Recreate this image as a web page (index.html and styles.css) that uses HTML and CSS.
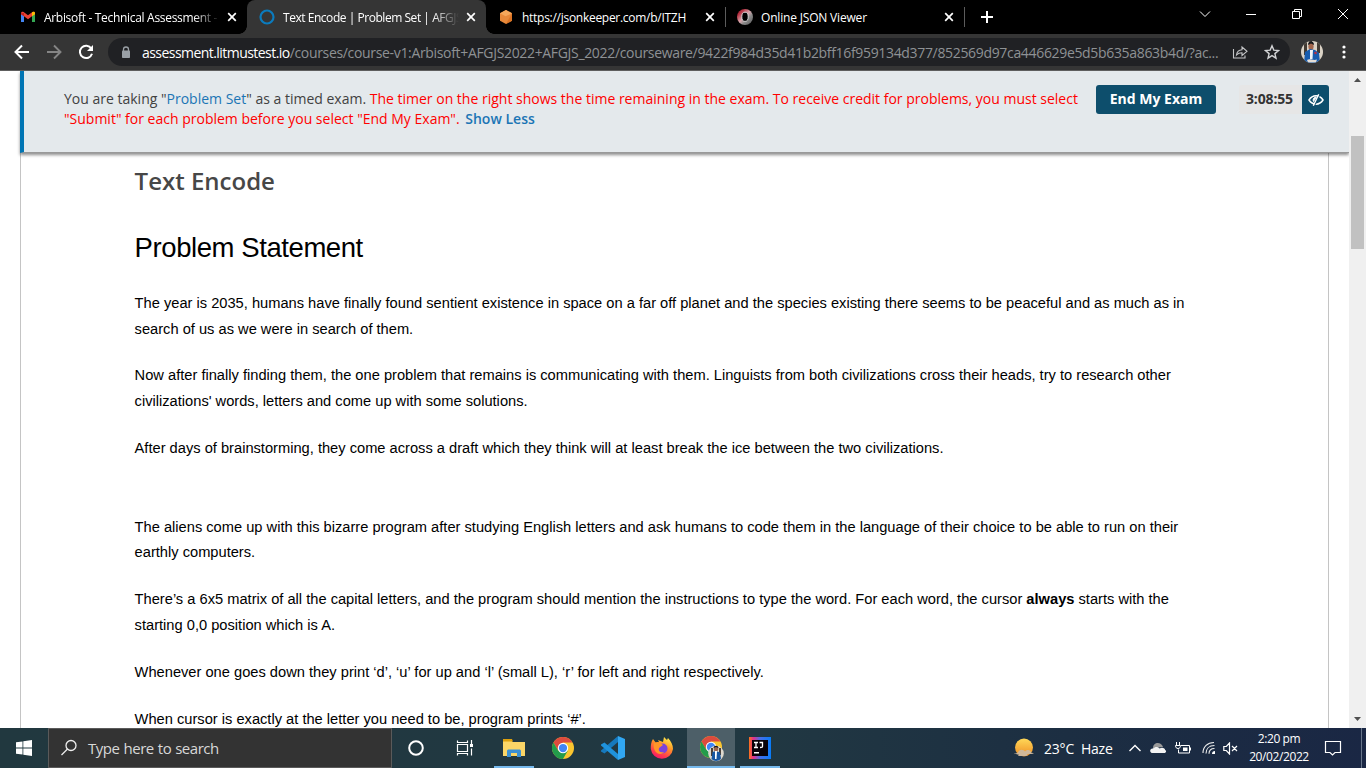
FILE: index.html
```html
<!DOCTYPE html>
<html lang="en">
<head>
<meta charset="utf-8">
<title>Text Encode | Problem Set</title>
<link rel="stylesheet" href="styles.css">
</head>
<body>
<div class="screen">
  <header class="tabstrip">
    <div class="tab">
      <svg class="favicon" viewBox="0 0 16 16"><path d="M1 13V4l3 2.2V13z" fill="#4285f4"/><path d="M12 13V6.2L15 4v9z" fill="#34a853"/><path d="M1 4.2C1 2.6 2.700 2.300 3.600 3L8 6.300 12.400 3C13.300 2.300 15 2.600 15 4.200V5L8 10.300 1 5z" fill="#ea4335"/><path d="M12 3.300C13.300 2.300 15 2.600 15 4.200V5.200L12 7.300z" fill="#fbbc04"/><path d="M1 4.200V5.200L4 7.300V4z" fill="#c5221f"/></svg>
      <span class="tab-title fade t1">Arbisoft - Technical Assessment -</span>
      <svg class="close" viewBox="0 0 10 10"><path d="M1.200 1.200l7.600 7.600M8.800 1.200L1.200 8.800"/></svg>
    </div>
    <div class="tab active">
      <svg class="favicon" viewBox="0 0 16 16"><circle cx="8" cy="8" r="6.500" fill="none" stroke="#0b7bbd" stroke-width="2.200"/></svg>
      <span class="tab-title fade t2">Text Encode | Problem Set | AFGJS</span>
      <svg class="close" viewBox="0 0 10 10"><path d="M1.200 1.200l7.600 7.600M8.800 1.200L1.200 8.800"/></svg>
    </div>
    <div class="tab">
      <svg class="favicon" viewBox="0 0 16 16"><path d="M8 1l6 3.300v7.400L8 15l-6-3.300V4.300z" fill="#e8893a"/><path d="M8 1l6 3.300-6.500 3L2 4.300z" fill="#f5a75b"/><path d="M14 4.300v7.400L8 15z" fill="#dc7424"/></svg>
      <span class="tab-title t3">https://jsonkeeper.com/b/ITZH</span>
      <svg class="close" viewBox="0 0 10 10"><path d="M1.200 1.200l7.600 7.600M8.800 1.200L1.200 8.800"/></svg>
    </div>
    <div class="tab ruled">
      <svg class="favicon" viewBox="0 0 16 16"><defs><linearGradient id="ring" x1="0" y1="0" x2="1" y2="1"><stop offset=".2" stop-color="#b52b3c"/><stop offset=".48" stop-color="#d8a7ad"/><stop offset=".65" stop-color="#8a8a8a"/><stop offset="1" stop-color="#555"/></linearGradient></defs><circle cx="8" cy="8" r="8" fill="url(#ring)"/><ellipse cx="8" cy="7.800" rx="3.200" ry="4.600" fill="#000" stroke="#ddd" stroke-width=".9"/></svg>
      <span class="tab-title t4">Online JSON Viewer</span>
      <svg class="close" viewBox="0 0 10 10"><path d="M1.200 1.200l7.600 7.600M8.800 1.200L1.200 8.800"/></svg>
    </div>
    <div class="newtab"><svg width="12" height="12" viewBox="0 0 12 12"><path d="M6 0v12M0 6h12" stroke="#fff" stroke-width="2"/></svg></div>
    <div class="winctl">
      <svg viewBox="0 0 12 12"><path d="M1 3.500l5 5 5-5"/></svg>
      <svg viewBox="0 0 12 12"><path d="M1 6.500h10"/></svg>
      <svg viewBox="0 0 12 12"><path d="M1.500 3.500h7v7h-7zM3.500 3.500v-2h7v7h-2"/></svg>
      <svg viewBox="0 0 12 12"><path d="M1 1l10 10M11 1L1 11"/></svg>
    </div>
  </header>

  <nav class="toolbar">
    <div class="navbtns">
      <svg width="16" height="16" viewBox="0 0 16 16"><path d="M15 8H2M8 1.500L1.500 8 8 14.500" stroke="#fff" stroke-width="2" fill="none"/></svg>
      <svg width="16" height="16" viewBox="0 0 16 16"><path d="M1 8h13M8 1.500L14.500 8 8 14.500" stroke="#858585" stroke-width="1.900" fill="none"/></svg>
      <svg width="16" height="16" viewBox="0 0 16 16"><path d="M13.300 4.500A6.200 6.200 0 1 0 14 9.800" stroke="#fff" stroke-width="2" fill="none"/><path d="M15 1v6H9z" fill="#fff"/></svg>
    </div>
    <div class="omnibox">
      <svg class="lock" width="10" height="13" viewBox="0 0 10 13"><path d="M2.500 5V3.500a2.500 2.500 0 0 1 5 0V5" fill="none" stroke="#9aa0a6" stroke-width="1.300"/><rect x="1" y="4.500" width="8" height="7.500" rx=".8" fill="#9aa0a6"/></svg>
      <span class="url"><b>assessment.litmustest.io</b><span class="path">/courses/course-v1:Arbisoft+AFGJS2022+AFGJS_2022/courseware/9422f984d35d41b2bff16f959134d377/852569d97ca446629e5d5b635a863b4d/?ac...</span></span>
      <svg class="share" width="16" height="16" viewBox="0 0 16 16"><path d="M1.500 5v9h11.500v-2.500M4.500 11C5 7.500 7 6 10 5.800V3l5 4.300-5 4.200V8.700C7.500 8.700 6 9.300 4.500 11z" fill="none" stroke="#c5c6c8" stroke-width="1.100"/></svg>
      <svg class="star" width="16" height="16" viewBox="0 0 16 16"><path d="M8 1.800l1.800 4.300 4.700.4-3.600 3.100 1.100 4.600L8 11.700l-4 2.500 1.100-4.600L1.500 6.500l4.700-.4z" fill="none" stroke="#d2d3d5" stroke-width="1.400"/></svg>
    </div>
    <svg class="avatar" width="22" height="22" viewBox="0 0 22 22"><defs><clipPath id="av"><circle cx="11" cy="11" r="11"/></clipPath></defs><g clip-path="url(#av)"><path d="M0 0h22v22H0z" fill="#dad2c5"/><path d="M3 0h3v14H3zM8 0h3v8H8zM16 0h3v12h-3z" fill="#423b34"/><ellipse cx="10" cy="5.500" rx="2.600" ry="3.500" fill="#a3664c"/><path d="M7 4c0-5 6-5 6 0L10 2.500z" fill="#17171a"/><path d="M3 22l1-11 5-3 5 1 4 3 1 10z" fill="#175cae"/><path d="M9 9l3 0-.5 9H9z" fill="#f1f4f7"/><circle cx="14.500" cy="12" r="1.300" fill="#b63045"/><path d="M6 19c3-2 6 1 10-.5l-1 3H7z" fill="#e5ded5"/></g></svg>
    <svg class="dots" width="4" height="14" viewBox="0 0 4 14" fill="#fff"><circle cx="2" cy="2" r="1.600"/><circle cx="2" cy="7" r="1.600"/><circle cx="2" cy="12" r="1.600"/></svg>
  </nav>

  <div class="viewport">
    <main class="page">
      <section class="exam-bar">
        <p class="exam-text"><span class="l1">You are taking "<a>Problem Set</a>" as a timed exam. <em>The timer on the right shows the time remaining in the exam. To receive credit for problems, you must select</em></span><br><span class="l2"><em>"Submit" for each problem before you select "End My Exam".</em> <a class="less">Show Less</a></span></p>
        <button class="end">End My Exam</button>
        <div class="timer"><span class="time">3:08:55</span><span class="eye"><svg width="16" height="12" viewBox="0 0 16 12" fill="none" stroke="#fff"><path d="M1 6C4.500 .3 11.500 .3 15 6 11.500 11.500 4.500 11.500 1 6z" stroke-width="1.500"/><path d="M8 3a3 3 0 0 0-2.500 4.500L8.200 3z" fill="#fff"/><path d="M11.800 .8L6.300 11.800" stroke="#0d4e6c" stroke-width="1.200"/><path d="M10.700 .3L5.300 11.700" stroke-width="1.400"/></svg></span></div>
      </section>
      <article class="content">
        <h2>Text Encode</h2>
        <h1>Problem Statement</h1>
        <p>The year is 2035, humans have finally found sentient existence in space on a far off planet and the species existing there seems to be peaceful and as much as in<br>search of us as we were in search of them.</p>
        <p>Now after finally finding them, the one problem that remains is communicating with them. Linguists from both civilizations cross their heads, try to research other<br>civilizations' words, letters and come up with some solutions.</p>
        <p class="break">After days of brainstorming, they come across a draft which they think will at least break the ice between the two civilizations.</p>
        <p>The aliens come up with this bizarre program after studying English letters and ask humans to code them in the language of their choice to be able to run on their<br>earthly computers.</p>
        <p>There’s a 6x5 matrix of all the capital letters, and the program should mention the instructions to type the word. For each word, the cursor <b>always</b> starts with the<br>starting 0,0 position which is A.</p>
        <p>Whenever one goes down they print ‘d’, ‘u’ for up and ‘l’ (small L), ‘r’ for left and right respectively.</p>
        <p>When cursor is exactly at the letter you need to be, program prints ‘#’.</p>
      </article>
    </main>
    <aside class="scrollbar">
      <svg width="7" height="4" viewBox="0 0 7 4"><path d="M0 4L3.500 0 7 4z" fill="#505050"/></svg>
      <div class="thumb"></div>
      <svg class="down" width="7" height="4" viewBox="0 0 7 4"><path d="M0 0h7L3.500 4z" fill="#505050"/></svg>
    </aside>
  </div>

  <footer class="taskbar">
    <div class="start"><svg width="16" height="16" viewBox="0 0 16 16" fill="#fff"><path d="M0 2.300L6.500 1.400v6.200H0zM7.300 1.300L16 0v7.600H7.300zM0 8.400h6.500v6.200L0 13.700zM7.300 8.400H16V16l-8.700-1.300z"/></svg></div>
    <div class="search"><svg width="18" height="18" viewBox="0 0 18 18" fill="none" stroke="#eee" stroke-width="1.300"><circle cx="11" cy="6.500" r="5"/><path d="M7.500 10L1.500 16"/></svg><span>Type here to search</span></div>
    <div class="apps">
      <div class="app"><svg width="18" height="18" viewBox="0 0 18 18"><circle cx="9" cy="9" r="6.800" fill="none" stroke="#fff" stroke-width="2"/></svg></div>
      <div class="app"><svg width="18" height="18" viewBox="0 0 18 18" fill="none" stroke="#fff" stroke-width="1.200"><path d="M1.500 1.500v2h10v-2M1.500 16.500v-2h10v2M1.500 5.500h10v7h-10zM15.500 1v4M15.500 9.500v7"/><path d="M14 5h3v3h-3z" fill="#fff" stroke="none"/></svg></div>
      <div class="app run"><svg width="22" height="20" viewBox="0 0 22 20"><path d="M0 2h8l1.500 2H22v14H0z" fill="#fbd667"/><path d="M0 1h9l1 2.500H0z" fill="#dda00d"/><path d="M4 18v-4.500c0-1.500.5-2 2-2h10c1.500 0 2 .5 2 2V19h-4v-4H8v4H4z" fill="#3c91d4"/></svg></div>
      <div class="app"><svg width="22" height="22" viewBox="0 0 24 24"><circle cx="12" cy="12" r="12" fill="#fbc52f"/><path d="M1.600 6A12 12 0 0 1 22.400 6H12L6.800 15z" fill="#dd4b3e"/><path d="M1.600 6A12 12 0 0 0 12 24l5.200-9H6.800z" fill="#239b4b"/><circle cx="12" cy="12" r="5.700" fill="#fff"/><circle cx="12" cy="12" r="4.500" fill="#4285f4"/></svg></div>
      <div class="app"><svg width="24" height="24" viewBox="0 0 24 24"><path d="M17 0v6L3.500 17.500 0 15.500v-1L17 0z" fill="#1679bd"/><path d="M17 24v-6L3.500 6.500 0 8.500v1L17 24z" fill="#1f92db"/><path d="M17 0l7 3v18l-7 3z" fill="#31a7f2"/></svg></div>
      <div class="app"><svg width="24" height="24" viewBox="0 0 24 24"><defs><linearGradient id="fox" x1=".8" y1="0" x2=".3" y2="1"><stop offset="0" stop-color="#fff34f"/><stop offset=".4" stop-color="#ff9826"/><stop offset=".8" stop-color="#ff3750"/><stop offset="1" stop-color="#f5156c"/></linearGradient></defs><path d="M3 3l3 4 3-1-1-2 5 2 1-5 3 3 1-2c3 3 5 7 5 11A11.200 11.200 0 0 1 .8 13C.8 9 1 6 3 3z" fill="url(#fox)"/><circle cx="12.500" cy="12.500" r="5" fill="#7c43db"/><path d="M4 7c4-2 6-1 9 2l-4 3c-1 3 1 5 5 4-4 5-12 0-10-9z" fill="#ff9628"/></svg></div>
      <div class="app current"><svg width="26" height="26" viewBox="0 0 26 26"><circle cx="12" cy="11" r="11" fill="#fbc52f"/><path d="M2.500 5.500A11 11 0 0 1 21.500 5.500H12l-4.700 8.300z" fill="#dd4b3e"/><path d="M2.500 5.500A11 11 0 0 0 12 22l4.700-8.200H7.300z" fill="#239b4b"/><circle cx="12" cy="11" r="5.200" fill="#fff"/><circle cx="12" cy="11" r="4.200" fill="#4285f4"/><circle cx="17" cy="17.500" r="7.800" fill="#dfd9ce"/><path d="M12 12h2v8h-2zM20 12h2v7h-2z" fill="#4a4038"/><circle cx="17" cy="13" r="2.400" fill="#9c644d"/><path d="M14.500 12c0-3 5-3 5 0L17 11z" fill="#17171a"/><path d="M12.500 23l1-7 3.500-1 4 1.500 1 6c-3 3.500-7 3-9.500.5z" fill="#1857a2"/><path d="M16 15h2l-.5 8h-1.500z" fill="#fff"/></svg></div>
      <div class="app run last"><svg width="22" height="22" viewBox="0 0 22 22"><defs><linearGradient id="ij"><stop offset="0" stop-color="#fb741c"/><stop offset=".2" stop-color="#e52f89"/><stop offset=".5" stop-color="#486ee8"/><stop offset="1" stop-color="#087cf8"/></linearGradient></defs><path d="M0 0h22v22H0z" fill="url(#ij)"/><path d="M3 3h16v16H3z" fill="#080309"/><path d="M5 5.500h4M7 5.500v5M5 10.500h4M10.500 5.500h3v4q0 1-2.500 1" fill="none" stroke="#fff" stroke-width="1.300"/><path d="M5 15h5v1.500H5z" fill="#fff"/></svg></div>
    </div>
    <div class="tray">
      <svg class="sun" width="20" height="20" viewBox="0 0 20 20"><defs><linearGradient id="sn" x2="0" y2="1"><stop offset="0" stop-color="#ffd858"/><stop offset="1" stop-color="#ef8e24"/></linearGradient></defs><circle cx="10" cy="9.500" r="9" fill="url(#sn)"/><path d="M0 15.500c2 0 3-.5 4-1 1-4 6-3 7-1 3-3 6-1 6 1l3 .7c-2 1-5 .8-7 .8 2 1.500-1 2-3 2H5c-1 0-1-1 0-1.500-2 0-4-.3-5-1z" fill="#ceb9a0" opacity=".95"/></svg>
      <span class="weather">23°C&nbsp; Haze</span>
      <svg class="chev" width="14" height="8" viewBox="0 0 14 8"><path d="M1.500 7L7 1.500 12.500 7" fill="none" stroke="#fff" stroke-width="1.400"/></svg>
      <svg class="cloud" width="17" height="12" viewBox="0 0 17 12"><path d="M3 6C3 0 11-1 13 5z" fill="#999"/><path d="M2 11c-3-1-2-5 1-4.500 2-2 5-2 6.500 0 3-2 6 0 5.500 1.500 2 .5 1 3-1 3z" fill="#f3f3f3"/></svg>
      <svg class="batt" width="16" height="13" viewBox="0 0 16 13" fill="none" stroke="#fff"><path d="M6 3.500h8.500v7.500H3.500V7.500M15.500 5.500v3"/><path d="M8 5.500h4.500v3.500H8z" fill="#fff" stroke="none"/><path d="M1.500 0v3M4.500 0v3M.5 3.500h5c0 2-1 3-2.500 3s-2.500-1-2.500-3z"/></svg>
      <svg class="wifi" width="14" height="14" viewBox="0 0 14 14" fill="none" stroke="#eee" stroke-width="1.100"><path d="M1 12C1 5.500 5.500 1.500 12 1.500M4 12.500C4 8 7 4.500 12.500 4.500M7 12.800C7 9.500 9 7.500 12.500 7.500"/><path d="M10 13c0-2 1-3 3-3v3z" fill="#fff" stroke="none"/></svg>
      <svg class="vol" width="15" height="13" viewBox="0 0 15 13" fill="none" stroke="#fff" stroke-width="1.200"><path d="M.8 4.500h2.500L6.500 1v11L3.300 8.500H.8zM9 4l5 5M14 4L9 9"/></svg>
      <div class="clock"><span class="hour">2:20 pm</span><span class="date">20/02/2022</span></div>
      <svg class="note" width="18" height="18" viewBox="0 0 18 18" fill="none" stroke="#fff" stroke-width="1.200"><path d="M1.500 2.500h15v11H11L8.500 16 6 13.500H1.500z"/></svg>
      <div class="peek"></div>
    </div>
  </footer>
</div>
</body>
</html>
```
FILE: styles.css
```css
* { box-sizing: border-box; }
body { margin: 0; font-family: "Open Sans", sans-serif; }
svg { display: block; flex: none; }
.screen { width: 1366px; height: 768px; display: flex; flex-direction: column; overflow: hidden; background: #fff; }

/* Tab strip */
.tabstrip { height: 34px; flex: none; background: #000; display: flex; padding-left: 8px; }
.tab { position: relative; width: 239px; height: 34px; display: flex; align-items: center; padding: 0 10px 0 12px; color: #fff; font-size: 12px; white-space: nowrap; }
.favicon { width: 16px; height: 16px; margin-right: 8px; }
.tab-title { flex: 1; overflow: hidden; }
.fade { -webkit-mask-image: linear-gradient(90deg, #000 85%, transparent); mask-image: linear-gradient(90deg, #000 85%, transparent); }
.close { width: 10px; height: 10px; margin-left: 7px; stroke: #fff; stroke-width: 1.7; }
.t1 { letter-spacing: -.31px; }
.t2 { letter-spacing: -.46px; }
.t3 { letter-spacing: -.28px; }
.t4 { letter-spacing: -.18px; }
.active { background: #353535; border-radius: 8px 8px 0 0; }
.active::before, .active::after { content: ""; position: absolute; bottom: 0; width: 8px; height: 8px; }
.active::before { left: -8px; background: radial-gradient(circle at 0 0, transparent 7.5px, #353535 8px); }
.active::after { right: -8px; background: radial-gradient(circle at 100% 0, transparent 7.5px, #353535 8px); }
.ruled::before, .ruled::after { content: ""; position: absolute; top: 7px; width: 1px; height: 20px; background: #5c5c5c; }
.ruled::before { left: 0; }
.ruled::after { right: -1px; }
.newtab { width: 46px; display: flex; align-items: center; justify-content: center; }
.winctl { margin-left: auto; display: flex; gap: 34px; padding: 8px 17px 0 0; }
.winctl svg { width: 12px; height: 12px; fill: none; stroke: #fff; stroke-width: 1; }

/* Toolbar */
.toolbar { height: 37px; flex: none; background: #353535; border-bottom: 1px solid #5e5e5e; display: flex; align-items: center; }
.navbtns { display: flex; gap: 16px; padding-left: 14px; width: 108px; }
.omnibox { width: 1182px; height: 28px; border-radius: 14px; background: #202124; display: flex; align-items: center; padding-left: 13px; }
.lock { margin-right: 11px; }
.url { width: 1079px; font-size: 14px; white-space: nowrap; color: #9aa0a6; }
.url b { font-weight: 400; color: #fff; letter-spacing: -.55px; }
.path { color: #8e9194; letter-spacing: -.33px; }
.share { margin-left: 11px; }
.star { margin-left: 16px; }
.avatar { margin-left: 11px; }
.dots { margin-left: 19px; }

/* Browser viewport */
.viewport { flex: 1; min-height: 0; display: flex; background: #fff; }
.page { width: 1349px; overflow: hidden; padding-left: 20px; }
.exam-bar { position: relative; height: 82px; width: 1329px; background: #e4e9ec; border-left: 4px solid #0075b4; border-bottom: 1px solid #999; box-shadow: 0 2px 3px rgba(0,0,0,.45); display: flex; align-items: flex-start; padding: 14px 20px 0 40px; }
.exam-text { width: 1032px; margin: 4px 0 0; font-size: 14px; line-height: 20px; color: #414141; white-space: nowrap; }
.exam-text em { font-style: normal; color: #f00; }
.exam-text a { color: #1b75b5; }
.exam-text .less { font-weight: 600; margin-left: 2px; }
.end { width: 120px; height: 29px; border: 0; border-radius: 3px; padding: 0 0 2px; background: #0d4e6c; color: #fff; font: 700 14px "Open Sans", sans-serif; }
.timer { display: flex; height: 29px; margin-left: 23px; }
.time { width: 63px; padding-left: 7px; background: #e6e6e6; border-radius: 3px 0 0 3px; font-size: 14px; font-weight: 700; letter-spacing: -.15px; line-height: 27px; color: #333; }
.eye { width: 27px; background: #0d4e6c; border-radius: 0 3px 3px 0; display: flex; align-items: center; justify-content: center; }

.content { width: 1309px; height: 580px; border: solid #c4c4c4; border-width: 0 1px; padding-left: 113.6px; color: #000; font-family: "Liberation Sans", Arial, sans-serif; font-size: 14.667px; white-space: nowrap; }
.content h2 { margin: 0; padding-top: 10px; font: 600 24px/36px "Open Sans", sans-serif; color: #474747; }
.content h1 { margin: 29px 0 23px; font-size: 27.5px; letter-spacing: -.42px; font-weight: 400; line-height: 40px; }
.content p { margin: 0 0 21.3px; line-height: 25.6px; }
.content .break { margin-bottom: 53.3px; }

.scrollbar { width: 17px; background: #f0f0f0; display: flex; flex-direction: column; align-items: center; padding: 7px 0 7px; }
.thumb { width: 13px; height: 113px; margin-top: 54px; background: #c1c1c1; }
.down { margin-top: auto; }

/* Taskbar */
.taskbar { height: 40px; flex: none; display: flex; background: linear-gradient(90deg, #21383f 0%, #213842 55%, #1c2e42 78%, #1a2744 100%); color: #fff; }
.start { width: 48px; display: flex; align-items: center; justify-content: center; }
.search { width: 344px; background: #333; border: 1px solid #5a5a5a; display: flex; align-items: center; padding-left: 11px; gap: 10px; font-size: 15px; letter-spacing: -.52px; word-spacing: .5px; color: #d8d8d8; }
.search span { letter-spacing: -.46px; }
.apps { display: flex; }
.app { width: 49.15px; height: 40px; display: flex; align-items: center; justify-content: center; border-bottom: 2px solid transparent; padding: 1px 1px 0 0; }
.run { position: relative; }
.run::after { content: ""; position: absolute; left: 4px; right: 5px; bottom: -2px; height: 2px; background: #76b9ed; }
.current { width: 48px; background: #4d5f68; border-bottom-color: #76b9ed; padding: 3px 0 0 3px; }
.last { margin-left: 1px; }
.tray { margin-left: auto; display: flex; align-items: center; }
.weather { width: 71px; margin: 0 13px 0 10px; font-size: 14px; letter-spacing: -.2px; white-space: nowrap; }
.cloud { margin-left: 8px; }
.batt { margin-left: 8px; }
.wifi { margin-left: 11px; }
.vol { margin-left: 7px; }
.clock { width: 66px; margin-left: 8px; display: flex; flex-direction: column; align-items: center; font-size: 12px; line-height: 18px; letter-spacing: -.4px; }
.note { margin-left: 12px; }
.peek { width: 5px; height: 40px; margin-left: 19px; border-left: 1px solid #68768a; }
```
